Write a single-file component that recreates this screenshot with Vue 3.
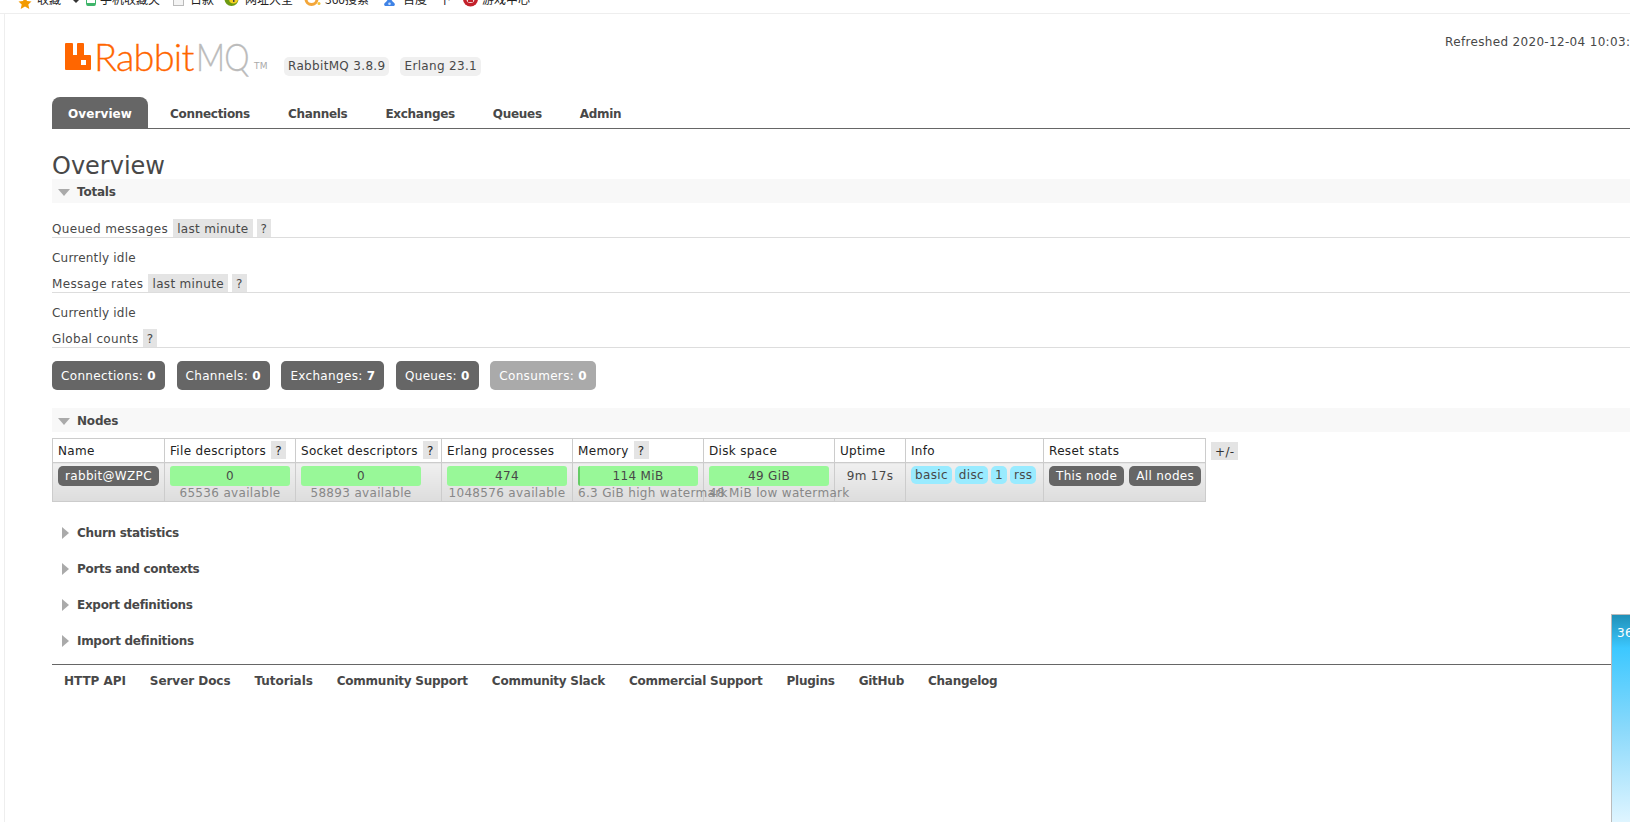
<template>
  <div class="page">
    <div class="bookmarks">
      <span v-for="b in bookmarks" :key="b.label" class="bookmark" :style="{ width: b.width + 'px' }">
        <svg width="18" height="16" viewBox="0 0 18 16" class="bookmark-icon" v-html="b.icon"></svg>
        <span class="bookmark-label" :style="{ left: b.offset + 'px' }">{{ b.label }}</span>
      </span>
    </div>

    <div class="main">
      <header class="header">
        <div class="logo">
          <svg class="logo-mark" width="26" height="27" viewBox="0 0 26 27">
            <path fill="#ff6600" fill-rule="evenodd" d="M1 0H7Q8 0 8 1V12H12V1Q12 0 13 0H18Q19 0 19 1V12H25Q26 12 26 13V26Q26 27 25 27H1Q0 27 0 26V1Q0 0 1 0ZM16 17H21V22H16Z" />
          </svg>
          <span class="logo-name">Rabbit<span class="logo-mq">MQ</span></span>
          <span class="logo-tm">TM</span>
        </div>
        <span class="version">RabbitMQ 3.8.9</span>
        <span class="version">Erlang 23.1</span>
        <span class="refreshed">Refreshed 2020-12-04 10:03:41</span>
      </header>

      <nav class="tabs">
        <a v-for="(t, i) in tabs" :key="t" class="tab" :class="{ active: i === 0 }">{{ t }}</a>
      </nav>

      <h1 class="title">Overview</h1>

      <div class="section-bar">
        <i class="arrow-down"></i><span>Totals</span>
      </div>

      <div class="sub-head first">Queued messages <span class="chip range">last minute</span><span class="chip">?</span></div>
      <p class="idle">Currently idle</p>
      <div class="sub-head">Message rates <span class="chip range">last minute</span><span class="chip">?</span></div>
      <p class="idle">Currently idle</p>
      <div class="sub-head">Global counts <span class="chip">?</span></div>

      <div class="counts">
        <span v-for="c in counts" :key="c.label" class="count" :class="{ faded: c.faded }">{{ c.label }}: <b>{{ c.value }}</b></span>
      </div>

      <div class="section-bar nodes-bar">
        <i class="arrow-down"></i><span>Nodes</span>
      </div>

      <div class="nodes">
        <table class="node-table">
          <thead>
            <tr>
              <th v-for="h in headers" :key="h.label" :style="{ width: h.width + 'px' }">
                {{ h.label }}<span v-if="h.help" class="chip help">?</span>
              </th>
            </tr>
          </thead>
          <tbody>
            <tr>
              <td class="name-cell"><span class="pill">rabbit@WZPC</span></td>
              <td v-for="m in meters" :key="m.sub">
                <div class="meter">
                  <i v-if="m.sliver" class="sliver"></i>{{ m.value }}
                </div>
                <div class="meter-sub" :class="{ overflowing: m.sliver !== undefined }">{{ m.sub }}</div>
              </td>
              <td class="uptime">9m 17s</td>
              <td>
                <span class="tags">
                  <span v-for="t in info" :key="t" class="tag">{{ t }}</span>
                </span>
              </td>
              <td>
                <span class="resets">
                  <span class="pill">This node</span>
                  <span class="pill">All nodes</span>
                </span>
              </td>
            </tr>
          </tbody>
        </table>
        <span class="chip toggle">+/-</span>
      </div>

      <div class="collapsed">
        <div v-for="s in collapsed" :key="s" class="collapsed-row">
          <i class="arrow-right"></i><span>{{ s }}</span>
        </div>
      </div>

      <footer class="footer">
        <a v-for="f in footer" :key="f">{{ f }}</a>
      </footer>
    </div>

    <div class="side-widget">36</div>
  </div>
</template>

<script setup>
const bookmarks = [
  {
    label: '收藏', width: 66, offset: 17,
    icon: '<path fill="#f39a00" d="M5 -3l2 4 4.500.5-3.200 3 1 4.500-4.300-2.400-4.300 2.400 1-4.500-3.200-3 4.500-.5z"/><path fill="#333" d="M53 0h6l-3 3z"/>'
  },
  {
    label: '手机收藏夹', width: 87, offset: 14,
    icon: '<rect x="0.500" y="-4" width="9" height="9.500" rx="1" fill="#fff" stroke="#3fb56a"/><rect x="1" y="3" width="8" height="2.500" fill="#3fb56a"/>'
  },
  {
    label: '日款', width: 52, offset: 17,
    icon: '<rect x="0.500" y="-4" width="10" height="9.500" fill="#f4f4f4" stroke="#bbb"/>'
  },
  {
    label: '网址大全', width: 80, offset: 20,
    icon: '<circle cx="6.500" cy="-1" r="7" fill="#6d9a12"/><circle cx="8.500" cy="-1" r="4.500" fill="#f4cf1e"/><rect x="8" y="-3" width="1.500" height="5" fill="#444"/>'
  },
  {
    label: '360搜索', width: 79, offset: 20,
    icon: '<circle cx="6.500" cy="-1" r="5.500" fill="none" stroke="#f3a63a" stroke-width="3"/><circle cx="14" cy="3.500" r="1.500" fill="#f3c33a"/>'
  },
  {
    label: '百度一下', width: 79, offset: 19,
    icon: '<path fill="#3f83e6" d="M1 6c-1.500-1-1-3 1-4 1-1 1.500-3 3.500-3s2.500 2 3.500 3c2 1 2.500 3 1 4z"/><circle cx="5.500" cy="3.800" r="1.300" fill="#cfe0fa"/>'
  },
  {
    label: '游戏中心', width: 80, offset: 19,
    icon: '<circle cx="7.500" cy="-1" r="7.500" fill="#c3212b"/><circle cx="7.500" cy="-1" r="4" fill="#f4d9da"/><rect x="5" y="-2" width="5" height="4" fill="#c3212b"/>'
  }
]

const tabs = ['Overview', 'Connections', 'Channels', 'Exchanges', 'Queues', 'Admin']

const counts = [
  { label: 'Connections', value: 0 },
  { label: 'Channels', value: 0 },
  { label: 'Exchanges', value: 7 },
  { label: 'Queues', value: 0 },
  { label: 'Consumers', value: 0, faded: true }
]

const headers = [
  { label: 'Name', width: 112 },
  { label: 'File descriptors', width: 131, help: true },
  { label: 'Socket descriptors', width: 146, help: true },
  { label: 'Erlang processes', width: 131 },
  { label: 'Memory', width: 131, help: true },
  { label: 'Disk space', width: 131 },
  { label: 'Uptime', width: 71 },
  { label: 'Info', width: 138 },
  { label: 'Reset stats', width: 162 }
]

const meters = [
  { value: '0', sub: '65536 available' },
  { value: '0', sub: '58893 available' },
  { value: '474', sub: '1048576 available' },
  { value: '114 MiB', sub: '6.3 GiB high watermark', sliver: true },
  { value: '49 GiB', sub: '48 MiB low watermark', sliver: false }
]

const info = ['basic', 'disc', '1', 'rss']

const collapsed = ['Churn statistics', 'Ports and contexts', 'Export definitions', 'Import definitions']

const footer = ['HTTP API', 'Server Docs', 'Tutorials', 'Community Support', 'Community Slack', 'Commercial Support', 'Plugins', 'GitHub', 'Changelog']
</script>

<style>
html, body {
  margin: 0;
  background: #fff;
}
</style>

<style scoped>
.page {
  position: relative;
  width: 1630px;
  height: 822px;
  overflow: hidden;
  background: #fff;
  color: #484848;
  font-family: "DejaVu Sans", Verdana, sans-serif;
  font-size: 12px;
  letter-spacing: 0.33px;
}

.bookmarks {
  display: flex;
  height: 13px;
  padding-left: 20px;
  border-bottom: 1px solid #eee;
  overflow: hidden;
  color: #222;
  letter-spacing: 0;
  font-family: "Noto Sans CJK SC", sans-serif;
}
.bookmark {
  position: relative;
  flex-shrink: 0;
  height: 13px;
}
.bookmark-icon {
  display: block;
  overflow: visible;
}
.bookmark-label {
  position: absolute;
  top: -7px;
  line-height: 12px;
  white-space: nowrap;
}

.main {
  margin-left: 4px;
  height: 808px;
  border-left: 1px solid #eee;
  padding-left: 47px;
}

.header {
  display: flex;
  align-items: flex-start;
  height: 83px;
  white-space: nowrap;
}
.logo {
  display: flex;
  align-items: flex-start;
  flex-shrink: 0;
  margin: 29px 0 0 13px;
  width: 219px;
}
.logo-mark {
  flex-shrink: 0;
}
.logo-name {
  margin-left: 3px;
  font-family: Lato, sans-serif;
  font-weight: 300;
  font-size: 38px;
  line-height: 27px;
  letter-spacing: -0.8px;
  -webkit-text-stroke: 0.3px currentColor;
  color: #ff6600;
  width: 156px;
  flex-shrink: 0;
}
.logo-mq {
  display: inline-block;
  margin-left: 2px;
  color: #bbb;
  transform: scaleX(0.84);
  transform-origin: left center;
}
.logo-tm {
  margin: 19px 0 0 4px;
  font-size: 9px;
  line-height: 9px;
  color: #aaa;
}
.version {
  margin: 43px 11px 0 0;
  padding: 0 4px;
  height: 19px;
  line-height: 19px;
  background: #f0f0f0;
  border-radius: 5px;
}
.refreshed {
  margin: 21px 0 0 953px;
  flex-shrink: 0;
}

.tabs {
  display: flex;
  gap: 6px;
  height: 31px;
  border-bottom: 1px solid #666;
  margin-right: -10px;
}
.tab {
  padding: 0 16px;
  height: 31px;
  line-height: 35px;
  font-weight: bold;
  letter-spacing: -0.3px;
}
.tab.active {
  background: #666;
  color: #fff;
  border-radius: 8px 8px 0 0;
  letter-spacing: 0.1px;
}

.title {
  margin: 25px 0 0;
  font-size: 24px;
  font-weight: normal;
  line-height: 25px;
  letter-spacing: 0;
}

.section-bar {
  display: flex;
  align-items: center;
  gap: 7px;
  box-sizing: border-box;
  height: 24px;
  padding: 2px 0 0 6px;
  background: #f8f8f8;
  font-weight: bold;
  letter-spacing: -0.2px;
  margin-right: -10px;
}
.arrow-down {
  width: 0;
  height: 0;
  border-left: 6px solid transparent;
  border-right: 6px solid transparent;
  border-top: 7px solid #aaa;
}
.arrow-right {
  width: 0;
  height: 0;
  border-top: 6px solid transparent;
  border-bottom: 6px solid transparent;
  border-left: 7px solid #aaa;
}

.sub-head {
  display: flex;
  align-items: flex-start;
  height: 18px;
  line-height: 20px;
  border-bottom: 1px solid #ddd;
  margin-top: 8px;
  margin-right: -10px;
  white-space: pre;
}
.sub-head.first {
  margin-top: 16px;
}
.chip {
  display: inline-block;
  box-sizing: border-box;
  height: 18px;
  padding: 2px 4px 0;
  background: #e4e4e4;
  line-height: 17px;
  margin-right: 4px;
}
.chip.range {
  margin-left: 1px;
}
.idle {
  margin: 12px 0 0;
  line-height: 16px;
  letter-spacing: 0.2px;
}

.counts {
  display: flex;
  gap: 11.5px;
  margin-top: 13px;
}
.count {
  box-sizing: border-box;
  padding: 1px 9px 0;
  height: 29px;
  line-height: 29px;
  background: #666;
  color: #fff;
  border-radius: 5px;
}
.count.faded {
  background: #aaa;
}

.nodes-bar {
  margin-top: 18px;
}

.nodes {
  display: flex;
  align-items: flex-start;
  gap: 5px;
  margin-top: 6px;
}
.node-table {
  border-collapse: collapse;
  table-layout: fixed;
  width: 1153px;
  font-size: 12px;
}
.node-table th {
  box-sizing: border-box;
  height: 24px;
  padding: 2px 5px 0;
  background: #fff;
  border: 1px solid #ccc;
  font-weight: normal;
  line-height: 21px;
  color: #222;
  text-align: left;
  vertical-align: top;
  white-space: nowrap;
}
.node-table td {
  box-sizing: border-box;
  height: 39px;
  padding: 3px 5px 0;
  border: 1px solid #ccc;
  background: linear-gradient(#f0f0f0, #ddd);
  vertical-align: top;
  text-align: center;
  white-space: nowrap;
}
.node-table .name-cell {
  text-align: left;
}
.chip.help {
  margin: 0 0 0 5px;
  vertical-align: top;
}
.pill {
  display: inline-block;
  height: 20px;
  line-height: 20px;
  padding: 0 7px;
  border-radius: 5px;
  background: #666;
  color: #fff;
}
.meter {
  position: relative;
  width: 120px;
  height: 20px;
  line-height: 20px;
  background: #98f898;
  border-radius: 3px;
  overflow: hidden;
}
.sliver {
  position: absolute;
  left: 0;
  top: 0;
  bottom: 0;
  width: 2px;
  background: #6c6;
}
.meter-sub {
  width: 120px;
  line-height: 15px;
  color: #888;
  text-align: center;
}
.meter-sub.overflowing {
  text-align: left;
}
.node-table .uptime {
  line-height: 20px;
}
.tags {
  display: flex;
  gap: 3px;
}
.tag {
  padding: 0 4px;
  height: 18px;
  line-height: 18px;
  border-radius: 5px;
  background: #99ebff;
}
.resets {
  display: flex;
  gap: 5px;
}
.chip.toggle {
  margin: 4px 0 0;
  color: #333;
}

.collapsed {
  margin-top: 13px;
}
.collapsed-row {
  display: flex;
  align-items: center;
  gap: 8px;
  height: 36px;
  padding-left: 10px;
  font-weight: bold;
  letter-spacing: -0.3px;
}

.footer {
  display: flex;
  gap: 24px;
  margin-top: 5px;
  margin-right: 7px;
  padding: 8px 0 0 12px;
  border-top: 1px solid #666;
  line-height: 17px;
  font-weight: bold;
  letter-spacing: -0.25px;
}
.footer a:nth-child(-n+3) {
  letter-spacing: -0.05px;
}

.side-widget {
  position: absolute;
  right: 0;
  bottom: 0;
  width: 19px;
  height: 208px;
  box-sizing: border-box;
  padding: 11px 0 0 5px;
  overflow: hidden;
  border-left: 1px solid #bbb;
  border-top: 1px solid #bbb;
  color: #fff;
  white-space: nowrap;
  background: linear-gradient(#2090b8, #3cc8ff 16%, #8ad9fb 55%, #dff5ff);
}
</style>
